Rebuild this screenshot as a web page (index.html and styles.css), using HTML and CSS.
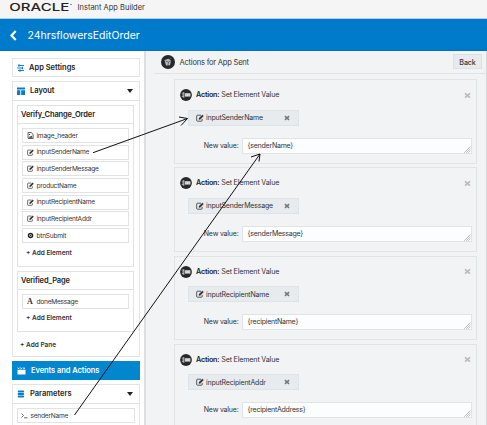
FILE: index.html
```html
<!DOCTYPE html>
<html lang="en">
<head>
<meta charset="utf-8">
<title>Instant App Builder</title>
<link rel="stylesheet" href="styles.css">
</head>
<body>
<svg class="defs" width="0" height="0">
  <symbol id="edit" viewBox="0 0 8 8"><path d="M5 1.200H1.400Q.7 1.200.7 1.900V6.500Q.7 7.200 1.400 7.200H5.500Q6.200 7.200 6.200 6.500V5" fill="none" stroke="currentColor" stroke-width=".8"/><path d="M2.700 5.800L3 4.100 6.400.7 7.700 2 4.300 5.400Z" fill="currentColor"/></symbol>
  <symbol id="x" viewBox="0 0 8 8"><path d="M1.200 1.500L6.800 6.500M6.800 1.500L1.200 6.500" stroke="currentColor" stroke-width="2"/></symbol>
  <symbol id="set" viewBox="0 0 12 12"><circle cx="6" cy="6" r="5.900" fill="#26282b"/><path d="M4.800 4.200H10.400V7.600H4.800Z" fill="#d5d7d9"/><path d="M1.800 4.200H4M1.800 7.600H4M3.800 3V9M2 6H3.800" stroke="#c9cbcd" stroke-width=".8"/></symbol>
  <symbol id="grip" viewBox="0 0 7 7"><path d="M.5 6.500L6.500.5M2.500 6.500L6.500 2.500M4.500 6.500L6.500 4.500" stroke="#888" stroke-width=".9" stroke-dasharray="1 .4"/></symbol>
</svg>
<header class="brand">
  <svg class="logo" width="63" height="12"><text x="-.7" y="10" textLength="60" lengthAdjust="spacingAndGlyphs">ORACLE</text><circle cx="61" cy="3.500" r=".6"/></svg>
  <span class="product">Instant App Builder</span>
</header>
<div class="titlebar">
  <svg width="7" height="11" viewBox="0 0 7 11"><path d="M5.700 1L1.500 5.500 5.700 10" fill="none" stroke="#fff" stroke-width="2.200"/></svg>
  <h1>24hrsflowersEditOrder</h1>
</div>
<div class="body">
  <aside class="sidebar">
    <section class="panel"><h2 class="settings"><svg width="8" height="8"><path d="M1 1.500H7M0 4H6M1 6.500H7" stroke="#1685c7" stroke-width="1"/><path d="M2 .3V2.700M5.500 2.800V5.200M3 5.300V7.700" stroke="#1685c7" stroke-width="1.200"/></svg><span>App Settings</span></h2></section>
    <section class="panel layout">
      <h2><svg width="8" height="8"><path d="M0 .5H8V2.500H0ZM0 3.300H3.300V8H0ZM4.200 3.300H8V8H4.200Z" fill="#087dc4"/></svg><span>Layout</span><i class="caret"></i></h2>
      <div class="panes">
        <div class="pane first">
          <h3>Verify_Change_Order</h3>
          <ul>
            <li><svg width="7" height="7" viewBox="0 0 8 8"><path d="M1.200.6H4.800L7 2.700V7.400H1.200Z" fill="none" stroke="currentColor" stroke-width=".9"/><path d="M2 6.500L3.500 4.500 4.400 5.300 5.300 4 6.200 6.500ZM2.300 2.400H3.500V3.500H2.300Z" fill="currentColor"/></svg>image_header</li>
            <li><svg width="7" height="7"><use href="#edit"/></svg>inputSenderName</li>
            <li><svg width="7" height="7"><use href="#edit"/></svg>inputSenderMessage</li>
            <li><svg width="7" height="7"><use href="#edit"/></svg>productName</li>
            <li><svg width="7" height="7"><use href="#edit"/></svg>inputRecipientName</li>
            <li><svg width="7" height="7"><use href="#edit"/></svg>inputRecipientAddr</li>
            <li><svg width="7" height="7"><circle cx="3.500" cy="3.500" r="2" fill="none" stroke="#222" stroke-width="1.500"/><path d="M3 2.500L4.500 3.500 3 4.500Z" fill="#222"/></svg>btnSubmit</li>
          </ul>
          <p class="add">+ Add Element</p>
        </div>
        <div class="pane second">
          <h3>Verified_Page</h3>
          <ul><li><b class="serif">A</b>doneMessage</li></ul>
          <p class="add">+ Add Element</p>
        </div>
        <p class="add addpane">+ Add Pane</p>
      </div>
    </section>
    <section class="panel events"><h2><svg width="9" height="8"><path d="M.5 3H8.500V7.500H.5Z" fill="#fff"/><path d="M.5.7L2.500 2.300M3.200.7L5.200 2.300M5.900.7L8.200 2.300M2.500.7L.8 2.300M5.200.7L3.500 2.300M8 .7L6.200 2.300" stroke="#fff" stroke-width=".8"/></svg><span>Events and Actions</span></h2></section>
    <section class="panel params">
      <h2><svg width="8" height="8"><rect x=".7" y=".5" width="6.400" height="2" rx=".9" fill="#087dc4"/><rect x=".7" y="3" width="6.400" height="2" rx=".8" fill="#087dc4"/><rect x=".7" y="5.500" width="6.400" height="2" rx=".9" fill="#087dc4"/></svg><span>Parameters</span><i class="caret"></i></h2>
      <ul><li><svg width="7" height="7"><path d="M.5 1.500L2.500 3.500.5 5.500M3 5.800H6.500" fill="none" stroke="#444" stroke-width=".8"/></svg>senderName</li><li></li></ul>
    </section>
  </aside>
  <main>
    <div class="heading">
      <svg width="14" height="14"><circle cx="7" cy="7" r="7" fill="#26282b"/><path d="M3.500 5L7.500 3.700 10 5.500 9 10.200 5 10.500Z" fill="#b9bbbd"/><path d="M4.500 6L7.500 7 10 5.500M7.500 7L7 10M8.500 3L10.700 4" fill="none" stroke="#55585a" stroke-width=".8"/></svg>
      <span class="name">Actions for App Sent</span><button>Back</button>
    </div>
    <div class="cards">
      <article>
        <div class="top"><svg width="12" height="12"><use href="#set"/></svg><span class="act"><b>Action:</b> Set Element Value</span><svg class="close" width="7" height="7"><use href="#x"/></svg></div>
        <div class="chip"><svg width="8" height="8"><use href="#edit"/></svg><span>inputSenderName</span><svg class="rm" width="6" height="6"><use href="#x"/></svg></div>
        <div class="row"><label>New value:</label><div class="field">{senderName}<svg width="7" height="7"><use href="#grip"/></svg></div></div>
      </article>
      <article>
        <div class="top"><svg width="12" height="12"><use href="#set"/></svg><span class="act"><b>Action:</b> Set Element Value</span><svg class="close" width="7" height="7"><use href="#x"/></svg></div>
        <div class="chip"><svg width="8" height="8"><use href="#edit"/></svg><span>inputSenderMessage</span><svg class="rm" width="6" height="6"><use href="#x"/></svg></div>
        <div class="row"><label>New value:</label><div class="field">{senderMessage}<svg width="7" height="7"><use href="#grip"/></svg></div></div>
      </article>
      <article>
        <div class="top"><svg width="12" height="12"><use href="#set"/></svg><span class="act"><b>Action:</b> Set Element Value</span><svg class="close" width="7" height="7"><use href="#x"/></svg></div>
        <div class="chip"><svg width="8" height="8"><use href="#edit"/></svg><span>inputRecipientName</span><svg class="rm" width="6" height="6"><use href="#x"/></svg></div>
        <div class="row"><label>New value:</label><div class="field">{recipientName}<svg width="7" height="7"><use href="#grip"/></svg></div></div>
      </article>
      <article>
        <div class="top"><svg width="12" height="12"><use href="#set"/></svg><span class="act"><b>Action:</b> Set Element Value</span><svg class="close" width="7" height="7"><use href="#x"/></svg></div>
        <div class="chip"><svg width="8" height="8"><use href="#edit"/></svg><span>inputRecipientAddr</span><svg class="rm" width="6" height="6"><use href="#x"/></svg></div>
        <div class="row"><label>New value:</label><div class="field">{recipientAddress}<svg width="7" height="7"><use href="#grip"/></svg></div></div>
      </article>
    </div>
  </main>
</div>
<svg class="arrows" width="487" height="425"><path d="M93 152.700L187.500 118.500M179 117L187.500 118.500 181 125.500M74.500 415L260 154M251 157L260 154 259 161.500"/></svg>
</body>
</html>
```
FILE: styles.css
```css
* { box-sizing: border-box; margin: 0; padding: 0; }
body { width: 487px; height: 425px; overflow: hidden; position: relative; font: 7px/10px Inter, "Liberation Sans", sans-serif; color: #333; background: #fff; }
svg { flex: none; display: block; }
ul { list-style: none; }
.defs { position: absolute; }
.brand { height: 19px; display: flex; align-items: flex-start; background: #f5f5f5; border-bottom: 1px solid #b3d0e3; padding: 1px 0 0 10px; }
.logo { font: 500 10px Inter, sans-serif; fill: #222; }
.product { font-size: 7.500px; line-height: 14px; margin-left: 4.500px; }
.titlebar { height: 32px; background: #007bcb; display: flex; align-items: center; padding: 1px 0 0 10px; color: #fff; border-bottom: 1px solid #0070bb; }
h1 { font-size: 10.500px; font-weight: 400; margin-left: 10.500px; line-height: 14px; padding-top: 1px; }
.body { display: flex; height: 374px; overflow: hidden; }
.sidebar { width: 146px; flex: none; border-right: 2px solid #dcdee0; padding: 7px 4px 0 12px; }
.panel { border: 1px solid #e3e4e5; width: 128px; margin-bottom: 4px; }
h2 { height: 18px; padding: 0 6px 0 4px; display: flex; align-items: center; font-size: 7.500px; font-weight: 600; color: #222; }
h2 span { flex: 1; margin-left: 5px; }
.settings { height: 17px; }
.settings span { margin-left: 4px; }
.caret { border: 3px solid transparent; border-top: 4px solid #222; border-bottom: 0; }
.layout { height: 276px; }
.panes { border-top: 1px solid #e3e4e5; padding: 4px; }
.pane { border: 1px solid #e1e2e3; width: 117px; }
.first { height: 162px; margin-bottom: 4px; }
.second { height: 61px; }
h3 { font-size: 7.500px; font-weight: 600; height: 18px; line-height: 17px; padding-left: 3px; border-bottom: 1px solid #e1e2e3; color: #222; letter-spacing: -.13px; }
.pane ul { padding: 4px 4px 0; }
li { height: 15px; border: 1px solid #e1e2e3; margin-bottom: 1.700px; display: flex; align-items: center; padding-left: 4px; font-size: 6.600px; letter-spacing: -.24px; }
li svg, .serif { width: 7px; margin-right: 2.500px; }
.serif { font: bold 8px "Liberation Serif", serif; }
.add { padding-left: 8px; font-size: 6.500px; font-weight: 600; color: #333; line-height: 10px; margin-top: 5px; }
.second .add { margin-top: 4px; }
.panes .addpane { padding-left: 3px; margin-top: 8px; }
.events { background: #0286cd; border-color: #0286cd; }
.events h2 { color: #fff; height: 17px; letter-spacing: -.06px; }
.params ul { border-top: 1px solid #e3e4e5; padding: 4px 4px 0; }
.params li { padding-left: 3px; }
main { flex: 1; background: #f2f3f5; border-right: 1px solid #d5d7d9; padding-left: 8px; }
.heading { height: 22.500px; border-bottom: 1px solid #e1e4e6; display: flex; align-items: center; padding: 0 4px 0 7px; }
.name { font-size: 7.600px; margin-left: 4.500px; flex: 1; letter-spacing: -.24px; padding-top: 2px; }
button { width: 29px; height: 15px; border: 1px solid #dce1e4; background: #e8ebed; font: 500 7.200px/14px Inter, sans-serif; color: #333; letter-spacing: -.15px; padding-top: 1px; }
.cards { padding: 5.500px 0 0 20px; }
article { width: 303px; height: 84.500px; margin-bottom: 3.800px; border: 1px solid #dfe4e8; padding: 9px 4px 0 5px; }
.top { display: flex; align-items: center; height: 12px; padding-right: 1px; }
.act { font-size: 7.200px; margin-left: 4px; flex: 1; letter-spacing: -.2px; }
.act b { font-weight: 600; color: #222; }
.close { color: #bbb; }
.chip { width: 111px; height: 16px; margin: 8.500px 0 0 8px; background: #e8ebee; border: 1px solid #dde3e7; display: flex; align-items: center; padding: 0 7px; }
.chip span { margin-left: 2px; flex: 1; padding-top: 1px; letter-spacing: -.2px; }
.rm { color: #777; margin-right: 1px; }
.row { display: flex; align-items: center; margin-top: 12px; }
label { width: 58.500px; text-align: right; margin-right: 3px; font-size: 7px; letter-spacing: -.2px; }
.field { flex: 1; height: 16px; background: #fcfdfe; border: 1px solid #e0e4e7; padding: 0 0 0 5px; display: flex; align-items: center; justify-content: space-between; font-size: 7px; letter-spacing: -.23px; }
.field svg { align-self: flex-end; }
.arrows { position: absolute; left: 0; top: 0; fill: none; stroke: #111; stroke-width: 1; }
```
